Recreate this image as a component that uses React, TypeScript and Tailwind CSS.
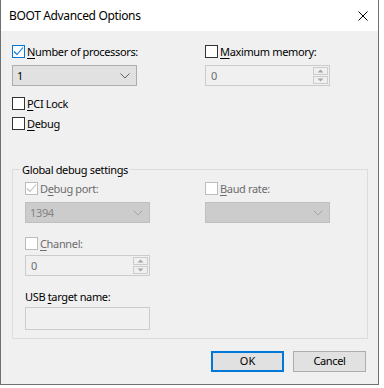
import React from "react";

const font = { fontFamily: '"Noto Sans", "Segoe UI", sans-serif' };

function Check({ checked, disabled, color }: { checked?: boolean; disabled?: boolean; color?: string }) {
  const border = disabled ? "border-[#bcbcbc]" : checked ? "border-[#0078d7]" : "border-[#333333]";
  return (
    <div className={`w-[13px] h-[13px] border ${border} bg-white flex items-center justify-center shrink-0`}>
      {checked && (
        <svg width="11" height="11" viewBox="0 0 11 11">
          <polyline points="1,5.5 4,8.5 10,1.5" fill="none" stroke={color ?? "#0078d7"} strokeWidth="1.1" />
        </svg>
      )}
    </div>
  );
}

function CheckRow({ checked, disabled, ul, rest, pre }: { checked?: boolean; disabled?: boolean; ul: string; rest: string; pre?: string }) {
  return (
    <div className="flex items-center h-[13px] gap-[2px]">
      <Check checked={checked} disabled={disabled} color={disabled ? "#bcbcbc" : undefined} />
      <span className={`text-[11px] tracking-[-0.35px] leading-[13px] whitespace-nowrap ${disabled ? "text-[#6d6d6d]" : "text-black"}`}>
        {pre}
        <u className="underline-offset-2">{ul}</u>
        {rest}
      </span>
    </div>
  );
}

function Chevron({ color }: { color: string }) {
  return (
    <svg width="10" height="6" viewBox="0 0 10 6">
      <polyline points="0.5,0.5 5,5 9.5,0.5" fill="none" stroke={color} strokeWidth="1" />
    </svg>
  );
}

function Combo({ value, disabled }: { value: string; disabled?: boolean }) {
  return (
    <div
      className={`w-[125px] h-[21px] border flex items-center pl-[4px] pr-[6px] justify-between ${
        disabled ? "bg-[#cccccc] border-[#bfbfbf] text-[#838383]" : "bg-[#e1e1e1] border-[#adadad] text-black"
      }`}
    >
      <span className="text-[11px] tracking-[-0.35px] leading-[13px]">{value}</span>
      <Chevron color={disabled ? "#a6a6a6" : "#606060"} />
    </div>
  );
}

function Spin({ value }: { value: string }) {
  return (
    <div className="w-[125px] h-[21px] border border-[#cccccc] bg-[#f0f0f0] flex">
      <div className="flex-1 pl-[5px] flex items-center text-[11px] leading-[13px] text-[#6d6d6d]">{value}</div>
      <div className="w-[17px] flex flex-col p-[1px] gap-[1px]">
        <div className="flex-1 border border-[#cccccc] flex items-center justify-center">
          <svg width="7" height="4" viewBox="0 0 7 4">
            <polygon points="0.5,3.5 3.5,0.5 6.5,3.5" fill="#a6a6a6" />
          </svg>
        </div>
        <div className="flex-1 border border-[#cccccc] flex items-center justify-center">
          <svg width="7" height="4" viewBox="0 0 7 4">
            <polygon points="0.5,0.5 3.5,3.5 6.5,0.5" fill="#a6a6a6" />
          </svg>
        </div>
      </div>
    </div>
  );
}

export default function App() {
  return (
    <div className="w-[384px] h-[388px] bg-white" style={font}>
      <div className="w-[379px] h-[385px] border-l border-r border-b border-[#707070] flex flex-col">
        <div className="h-[31px] bg-white flex items-center justify-between pl-[8px] pr-[10px] shrink-0">
          <span className="text-[12px] tracking-[-0.35px] text-black leading-[15px]">BOOT Advanced Options</span>
          <svg width="10" height="10" viewBox="0 0 10 10">
            <path d="M0.5 0.5 L9.5 9.5 M9.5 0.5 L0.5 9.5" stroke="#000" strokeWidth="1" />
          </svg>
        </div>
        <div className="flex-1 bg-[#f0f0f0] pl-[11px] pt-[14px]">
          <div className="flex">
            <div className="w-[193px]">
              <CheckRow checked ul="N" rest="umber of processors:" />
              <div className="mt-[7px]">
                <Combo value="1" />
              </div>
            </div>
            <div>
              <CheckRow ul="M" rest="aximum memory:" />
              <div className="mt-[7px]">
                <Spin value="0" />
              </div>
            </div>
          </div>
          <div className="mt-[11px]">
            <CheckRow ul="P" rest="CI Lock" />
          </div>
          <div className="mt-[7px]">
            <CheckRow ul="D" rest="ebug" />
          </div>
          <div className="mt-[39px] w-[356px] h-[170px] border border-[#dcdcdc] relative pt-[12px] pl-[12px]">
            <span className="absolute left-[7px] top-[-8px] px-[2px] bg-[#f0f0f0] text-[11px] tracking-[-0.35px] leading-[15px] text-black whitespace-nowrap">
              Global debug settings
            </span>
            <div className="flex">
              <div className="w-[180px]">
                <CheckRow checked disabled pre="D" ul="e" rest="bug port:" />
                <div className="mt-[7px]">
                  <Combo value="1394" disabled />
                </div>
              </div>
              <div>
                <CheckRow disabled ul="B" rest="aud rate:" />
                <div className="mt-[7px]">
                  <Combo value="" disabled />
                </div>
              </div>
            </div>
            <div className="mt-[14px]">
              <CheckRow disabled ul="C" rest="hannel:" />
            </div>
            <div className="mt-[5px]">
              <Spin value="0" />
            </div>
            <div className="mt-[13px] h-[15px] text-[11px] tracking-[-0.35px] leading-[15px] text-black">
              USB <u className="underline-offset-2">t</u>arget name:
            </div>
            <div className="mt-[3px] w-[125px] h-[23px] border border-[#cccccc] bg-[#f0f0f0]" />
          </div>
          <div className="mt-[12px] ml-[199px] flex gap-[9px]">
            <div className="w-[73px] h-[21px] border-2 border-[#0078d7] bg-[#e1e1e1] flex items-center justify-center text-[11px] text-black">
              OK
            </div>
            <div className="w-[73px] h-[21px] border border-[#adadad] bg-[#e1e1e1] flex items-center justify-center text-[11px] tracking-[-0.35px] text-black">
              Cancel
            </div>
          </div>
        </div>
      </div>
    </div>
  );
}
